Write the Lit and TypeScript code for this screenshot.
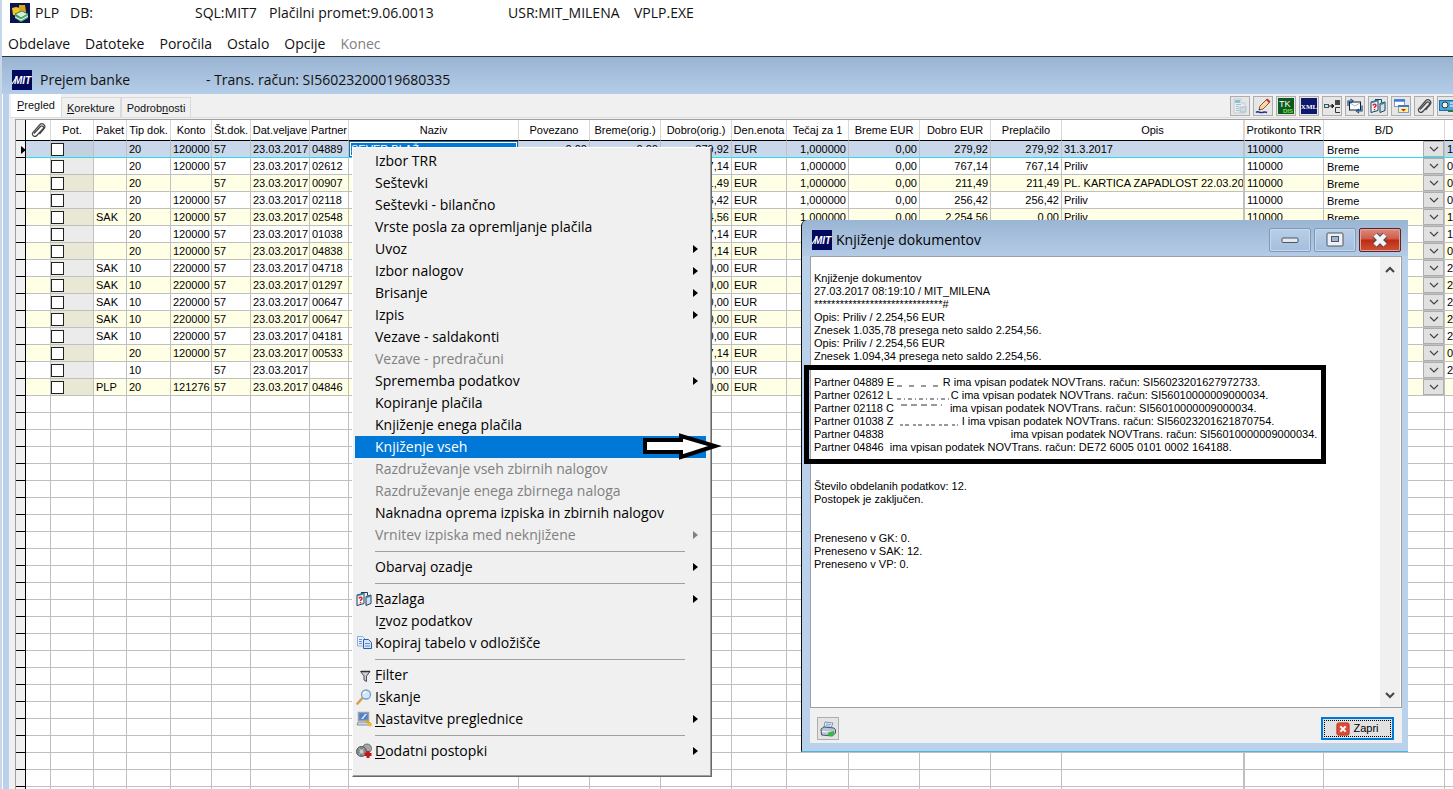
import { LitElement, html, svg, css, nothing } from "lit";
import { customElement, state } from "lit/decorators.js";
import { classMap } from "lit/directives/class-map.js";

type Align = "l" | "r" | "c";

interface Column {
  title: string;
  width: number;
  align: Align;
}

const COLUMNS: Column[] = [
  { title: "Pot.", width: 43, align: "l" },
  { title: "Paket", width: 33, align: "l" },
  { title: "Tip dok.", width: 44, align: "l" },
  { title: "Konto", width: 41, align: "r" },
  { title: "Št.dok.", width: 39, align: "l" },
  { title: "Dat.veljave", width: 59, align: "l" },
  { title: "Partner", width: 39, align: "l" },
  { title: "Naziv", width: 170, align: "l" },
  { title: "Povezano", width: 71, align: "r" },
  { title: "Breme(orig.)", width: 71, align: "r" },
  { title: "Dobro(orig.)", width: 71, align: "r" },
  { title: "Den.enota", width: 55, align: "l" },
  { title: "Tečaj za 1", width: 62, align: "r" },
  { title: "Breme EUR", width: 71, align: "r" },
  { title: "Dobro EUR", width: 71, align: "r" },
  { title: "Preplačilo", width: 71, align: "r" },
  { title: "Opis", width: 183, align: "l" },
  { title: "Protikonto TRR", width: 79, align: "l" },
  { title: "B/D", width: 121, align: "l" },
];

// paket, tip, konto, št. dok., datum, partner, naziv, povezano, breme, dobro, enota,
// tečaj, breme EUR, dobro EUR, preplačilo, opis, protikonto, zadnji stolpec
const ROWS: string[][] = [
  ["", "20", "120000", "57", "23.03.2017", "04889", "SEVER BLAŽ", "0,00", "0,00", "279,92", "EUR", "1,000000", "0,00", "279,92", "279,92", "31.3.2017", "110000", "1"],
  ["", "20", "120000", "57", "23.03.2017", "02612", "", "", "", "767,14", "EUR", "1,000000", "0,00", "767,14", "767,14", "Priliv", "110000", "0"],
  ["", "20", "", "57", "23.03.2017", "00907", "", "", "", "211,49", "EUR", "1,000000", "0,00", "211,49", "211,49", "PL. KARTICA ZAPADLOST 22.03.20", "110000", "0"],
  ["", "20", "120000", "57", "23.03.2017", "02118", "", "", "", "256,42", "EUR", "1,000000", "0,00", "256,42", "256,42", "Priliv", "110000", "0"],
  ["SAK", "20", "120000", "57", "23.03.2017", "02548", "", "", "", "2.254,56", "EUR", "1,000000", "0,00", "2.254,56", "0,00", "Priliv", "110000", "1"],
  ["", "20", "120000", "57", "23.03.2017", "01038", "", "", "", "767,14", "EUR", "", "", "", "", "", "", "1"],
  ["", "20", "120000", "57", "23.03.2017", "04838", "", "", "", "767,14", "EUR", "", "", "", "", "", "", "0"],
  ["SAK", "10", "220000", "57", "23.03.2017", "04718", ".", "", "", "0,00", "EUR", "", "", "", "", "", "", "2"],
  ["SAK", "10", "220000", "57", "23.03.2017", "01297", "", "", "", "0,00", "EUR", "", "", "", "", "", "", "2"],
  ["SAK", "10", "220000", "57", "23.03.2017", "00647", "", "", "", "0,00", "EUR", "", "", "", "", "", "", "2"],
  ["SAK", "10", "220000", "57", "23.03.2017", "00647", "", "", "", "0,00", "EUR", "", "", "", "", "", "", "2"],
  ["SAK", "10", "220000", "57", "23.03.2017", "04181", "", "", "", "0,00", "EUR", "", "", "", "", "", "", "2"],
  ["", "20", "120000", "57", "23.03.2017", "00533", "", "", "", "767,14", "EUR", "", "", "", "", "", "", "0"],
  ["", "10", "", "57", "23.03.2017", "", "", "", "", "0,00", "EUR", "", "", "", "", "", "", "2"],
  ["PLP", "20", "121276", "57", "23.03.2017", "04846", "", "", "", "0,00", "EUR", "", "", "", "", "", "", ""],
];

const EMPTY_ROWS = Array.from({ length: 60 });

const icon = (body: unknown, size = 16) =>
  html`<svg width=${size} height=${size} viewBox="0 0 16 16" aria-hidden="true">${body}</svg>`;

const helpBooks = svg`
  <path d="M1 4l7-2v10.500l-7 2z" fill="#f2f7fa" stroke="#1f3f5c"/>
  <path d="M10 5.500l5-1.500v8.500l-5 2z" fill="#cfe4ee" stroke="#1f3f5c"/>
  <path d="M5 1.500h6.500v3" fill="none" stroke="#1f3f5c"/>
  <path d="M1.500 4.500l6-1.700M10.500 6.200l4-1.200" stroke="#2f86b0" stroke-width="1.500"/>
  <path d="M3 7.500c.4-1.700 3.400-1.500 2.900.3-.3 1-1.400.8-1.400 2.200M4.500 11v1.200" fill="none" stroke="#d22" stroke-width="1.500"/>`;

const clip = svg`
  <path d="M4 11.500l6.500-7c1.500-1.600 4 .4 2.600 2.200L6.800 13.500c-2.300 2.400-5.800-.6-3.700-3.200L9.500 3c2.800-3 7 .4 4.600 3.600l-4.600 5.400" fill="none" stroke="#444" stroke-width="1.200"/>`;

const ICONS: Record<string, unknown> = {
  clip,
  help: helpBooks,
  sheet: svg`
    <path d="M2 1h7v4h4v10H2z" fill="#e6edf2" stroke="#c0ccd6"/>
    <path d="M4 6.500h5M4 8.500h3M4 10.500h3M4 12.500h3" stroke="#a9bfd0"/>
    <rect x="8" y="9" width="6" height="5" fill="#cfd8df" stroke="#b4c1cc"/>
    <rect x="3" y="2" width="5" height="3" fill="#8fbdd6"/>`,
  pencil: svg`
    <path d="M4 12l1-4 7-7 3 3-7 7z" fill="#fbd9a0" stroke="#8a5a30"/>
    <path d="M11 2l1.500-1.500 3 3L14 5z" fill="#c83030"/>
    <path d="M4 12l1.500-.4-1-1.200z" fill="#222"/>
    <path d="M1 14.500c2-2 4 .8 6 0s3-1 5 0" fill="none" stroke="#1c2a9c" stroke-width="1.500"/>`,
  tk: svg`
    <rect width="16" height="16" fill="#0c5a1e"/>
    <text x="1" y="9" font-size="9" fill="#fff" font-family="Liberation Sans">TK</text>
    <text x="5" y="15" font-size="6" fill="#7fe04a" font-weight="bold" font-family="Liberation Sans">DIS</text>`,
  xml: svg`
    <rect width="16" height="16" fill="#10186e"/>
    <text x="8" y="11" text-anchor="middle" font-size="7" font-weight="bold" fill="#fff" font-family="Liberation Serif">XML</text>`,
  tree: svg`
    <rect x="0.500" y="6.500" width="4" height="3" fill="#cfe9df" stroke="#356"/>
    <path d="M5 8h4M8 6l2 2-2 2z" fill="#222" stroke="#222"/>
    <rect x="11" y="2" width="5" height="5" fill="#444"/>
    <path d="M16 9.500h-4.500v5H16" fill="none" stroke="#333"/>`,
  mail: svg`
    <rect x="2.500" y="4" width="11" height="8" fill="#fff" stroke="#123"/>
    <path d="M3 5l5 3L13 5" fill="none" stroke="#9ab" stroke-width=".8"/>
    <path d="M1 8V3h3M3.500 1L6 3 3.500 5M15 7.500V13h-4M12 11l-2.500 2 2.500 2" fill="none" stroke="#134b86" stroke-width="1.200"/>`,
  windows: svg`
    <rect x="1.500" y="1.500" width="10" height="7" fill="#fff" stroke="#7f9cc9"/>
    <path d="M1 2.500h11" stroke="#3f78d8" stroke-width="2.400"/>
    <rect x="5.500" y="7.500" width="10" height="7" fill="#fff29a" stroke="#7f9cc9"/>
    <path d="M5 8h11" stroke="#3f78d8" stroke-width="2"/>
    <path d="M8 11h5l-2.500 2.500z" fill="#c22"/>`,
  monitor: svg`
    <rect x="0.500" y="2.500" width="15" height="10" fill="#4aa6e0" stroke="#1f6aa5"/>
    <circle cx="6" cy="7" r="3" fill="#f2f8c8" stroke="#236"/>
    <path d="M11 5h4M11 8h4" stroke="#fff"/>
    <path d="M9 13h6" stroke="#2a7a3c" stroke-width="2"/>`,
  copy: svg`
    <path d="M1.500 1.500h5l2.500 2.500v7H1.500z" fill="#e8f1ff" stroke="#8fadd8"/>
    <path d="M7.500 4.500h5l3 3v6h-8z" fill="#d3e4fb" stroke="#2f5ca6"/>
    <path d="M3 4.500h3M3 6.500h3M3 8.500h3M9 8.500h5M9 11h5" stroke="#5f8fd0"/>`,
  filter: svg`
    <path d="M4.500 4.500h9.500L10.500 9v5.500L8 13V9z" fill="#c9ccd0" stroke="#4b4f55"/>
    <path d="M5 4.500h9" stroke="#2e3136" stroke-width="1.500"/>`,
  search: svg`
    <path d="M1.500 14.500l4.500-5" stroke="#dd9a4a" stroke-width="2.600" stroke-linecap="round"/>
    <circle cx="10" cy="5.500" r="4.500" fill="#cfe9fb" stroke="#7a9fc4" stroke-width="1.300"/>
    <path d="M7.500 5a2.600 2.600 0 012.500-2.200" fill="none" stroke="#fff" stroke-width="1.300"/>`,
  settings: svg`
    <rect x="2.500" y="1.500" width="10" height="8" fill="#4f7fc8" stroke="#9aa1ab" stroke-width="1.500"/>
    <path d="M5 8l4-5h2l-4 5z" fill="#d8e9fb"/>
    <path d="M2 11h11l1 3H1z" fill="#d0d5db" stroke="#8a929c"/>
    <path d="M10 9l4 4" stroke="#d9a028" stroke-width="2.400"/><circle cx="14" cy="13.500" r="2" fill="#e9bd3c"/>`,
  gears: svg`
    <circle cx="11" cy="5.500" r="4.500" fill="#a4a8ab" stroke="#6b6f72"/>
    <circle cx="5.500" cy="8.500" r="5" fill="#84888b" stroke="#55595c"/>
    <path d="M3 5l5 7M8 5l-5 7" stroke="#b7babc"/>
    <circle cx="5.500" cy="8.500" r="2" fill="#c9ccce"/>
    <path d="M12 8v7M8.500 11.500h7" stroke="#c81414" stroke-width="3"/>`,
  printer: svg`
    <path d="M5 1l8 1-2 5-7-1z" fill="#eef5ff" stroke="#7b93b8"/>
    <path d="M6 3l5 .5M5.500 4.700l5 .5" stroke="#7f9fd0"/>
    <path d="M1 8l3-2 10 1 1.500 1.500V12l-3 3-11-1z" fill="#b9c4d2" stroke="#47566b"/>
    <path d="M2 10.500l10 .8" stroke="#fff"/>
    <path d="M8 11.500l6-1.500v3L12 14.500H8z" fill="#2fbf36"/>`,
  close: svg`
    <rect x="1" y="1" width="14" height="14" rx="2" fill="#e04a35" stroke="#b03020"/>
    <path d="M5 5l6 6M11 5l-6 6" stroke="#fff" stroke-width="2.400"/>`,
};

const TOOLBAR: [string, string][] = [
  ["sheet", "Dokument"],
  ["pencil", "Uredi"],
  ["tk", "TKDIS"],
  ["xml", "XML"],
  ["tree", "Vezave"],
  ["mail", "Pošlji"],
  ["help", "Razlaga"],
  ["windows", "Okna"],
  ["clip", "Priponke"],
  ["monitor", "Prikaz"],
];

interface MenuItem {
  label?: string;
  key?: number;
  sub?: boolean;
  off?: boolean;
  icon?: string;
}

const MENU: MenuItem[] = [
  { label: "Izbor TRR" },
  { label: "Seštevki" },
  { label: "Seštevki - bilančno" },
  { label: "Vrste posla za opremljanje plačila" },
  { label: "Uvoz", sub: true },
  { label: "Izbor nalogov", sub: true },
  { label: "Brisanje", sub: true },
  { label: "Izpis", sub: true },
  { label: "Vezave - saldakonti" },
  { label: "Vezave - predračuni", off: true },
  { label: "Sprememba podatkov", sub: true },
  { label: "Kopiranje plačila" },
  { label: "Knjiženje enega plačila" },
  { label: "Knjiženje vseh" },
  { label: "Razdruževanje vseh zbirnih nalogov", off: true },
  { label: "Razdruževanje enega zbirnega naloga", off: true },
  { label: "Naknadna oprema izpiska in zbirnih nalogov" },
  { label: "Vrnitev izpiska med neknjižene", off: true, sub: true },
  {},
  { label: "Obarvaj ozadje", sub: true },
  {},
  { label: "Razlaga", key: 0, sub: true, icon: "help" },
  { label: "Izvoz podatkov", key: 1 },
  { label: "Kopiraj tabelo v odložišče", icon: "copy" },
  {},
  { label: "Filter", key: 0, icon: "filter" },
  { label: "Iskanje", key: 1, icon: "search" },
  { label: "Nastavitve preglednice", key: 0, sub: true, icon: "settings" },
  {},
  { label: "Dodatni postopki", key: 0, sub: true, icon: "gears" },
];

const accel = (text: string, at?: number) =>
  at === undefined
    ? text
    : html`${text.slice(0, at)}<u>${text[at]}</u>${text.slice(at + 1)}`;

const mitLogo = () => html`<svg width="20" height="20" viewBox="0 0 20 20" aria-hidden="true">
  <rect width="20" height="20" fill="#00085c" />
  <path d="M0 14l4-6" stroke="#fff" stroke-width="1.200" />
  <text x="2" y="14" font-family="Liberation Sans" font-size="10" font-weight="bold" font-style="italic" fill="#fff">MIT</text>
</svg>`;

const shared = css`
  * { box-sizing: border-box; }
  button, input, select { font: inherit; color: inherit; margin: 0; padding: 0; }
  svg { display: block; flex: none; }
`;

@customElement("payments-grid")
class PaymentsGrid extends LitElement {
  static styles = [shared, css`
    :host { display: block; flex: 1; min-height: 0; overflow: hidden; background: #fff; border: solid #a0a0a0; border-width: 1px 0 0 1px; font: 11px/16px "Liberation Sans", sans-serif; color: #000; }
    table { table-layout: fixed; width: 100%; border-collapse: separate; border-spacing: 0; }
    th, td { padding: 0 2px; border-right: 1px solid #c0c0c0; border-bottom: 1px solid #c0c0c0; font-weight: normal; white-space: nowrap; overflow: hidden; text-align: left; }
    td { height: 17px; }
    th { height: 21px; text-align: center; border-right-color: #d8d8d8; border-bottom-color: #000; padding: 0; }
    th svg { margin: 0 auto; }
    .r { text-align: right; }
    .mark { background: #f0f0f0; border-right: 1px solid #000; border-bottom-color: #000; padding: 0; }
    .mark svg { margin: 2px 0 0 4px; }
    .edge { border-right-width: 2px; }
    .alt td { background: #ffffe6; }
    .pot { padding: 0; }
    .body .pot { background: #ebebeb; }
    .body.alt .pot { background: #e8e8d4; }
    .body .mark { background: #f0f0f0; }
    .cur td { background: #c8d8ea; border-bottom-color: #28dcf0; }
    .cur .pot { background: #c3d0e0; }
    .cur .mark { border-bottom-color: #000; }
    .cur .bd { background: #fff; }
    .cur .field { background: #0078d7; color: #fff; box-shadow: inset 0 0 0 1px #1c6e9c, inset 0 0 0 2px #fff; }
    .pot input { appearance: none; display: block; width: 13px; height: 13px; margin-top: 1px; background: #fff; border: 1px solid #222; }
    .bd { padding: 0; }
    .pick { display: grid; grid-template-columns: 1fr 21px; height: 16px; }
    .pick select { appearance: none; grid-area: 1 / 1 / 2 / 3; border: 0; background: transparent; padding: 2px 24px 0 3px; line-height: 14px; border-radius: 0; }
    .drop { grid-area: 1 / 2; pointer-events: none; background: #e1e1e1; border: 1px solid #adadad; display: grid; place-items: center; }
    .last { border-right: 0; }
  `];

  private row(r: string[], i: number) {
    const cells = r.slice(0, 17);
    return html`<tr class=${classMap({ body: true, alt: i > 0 && i % 2 === 0, cur: i === 0 })}>
      <td class="mark">${i === 0 ? html`<svg width="6" height="8" viewBox="0 0 6 8"><path d="M1 0l5 4-5 4z" /></svg>` : nothing}</td>
      <td></td>
      <td class="pot"><input type="checkbox" aria-label="Potrditev ${i + 1}" /></td>
      ${cells.map((v, c) => html`<td class=${classMap({ r: COLUMNS[c + 1].align === "r", edge: c === 15, field: c === 6 && i === 0 })}>${v}</td>`)}
      <td class="bd">
        <div class="pick">
          <select aria-label="B/D ${i + 1}"><option>Breme</option><option>Dobro</option></select>
          <span class="drop"><svg width="10" height="6" viewBox="0 0 10 6"><path d="M1 1l4 4 4-4" fill="none" stroke="#444" stroke-width="1.200" /></svg></span>
        </div>
      </td>
      <td class="last">${r[17]}</td>
    </tr>`;
  }

  render() {
    return html`<table>
      <colgroup>
        <col style="width:10px" /><col style="width:25px" />
        ${COLUMNS.map((c) => html`<col style="width:${c.width}px" />`)}
        <col />
      </colgroup>
      <thead><tr>
        <th class="mark"></th>
        <th>${icon(clip)}</th>
        ${COLUMNS.map((c) => html`<th class=${classMap({ edge: c.title === "Opis" })}>${c.title}</th>`)}
        <th class="last"></th>
      </tr></thead>
      <tbody>
        ${ROWS.map((r, i) => this.row(r, i))}
        ${EMPTY_ROWS.map(() => html`<tr><td class="mark"></td><td></td>
          ${COLUMNS.map((c) => html`<td class=${classMap({ edge: c.title === "Opis" })}></td>`)}<td class="last"></td></tr>`)}
      </tbody>
    </table>`;
  }
}

@customElement("context-menu")
class ContextMenu extends LitElement {
  static styles = [shared, css`
    :host { display: flex; flex-direction: column; width: 360px; padding: 2px 5px 14px 2px; background: #f0f0f0; border: 1px solid; border-color: #fff #696969 #696969 #fff; box-shadow: inset -1px -1px #a0a0a0; font: 14px/22px "Open Sans", sans-serif; color: #000; }
    button { display: grid; grid-template-columns: 20px 1fr 14px; align-items: center; height: 22px; padding-left: 0; border: 0; background: none; text-align: left; white-space: nowrap; }
    .on { background: #0078d7; color: #fff; }
    button:disabled { color: #808080; }
    button svg { margin-left: 1px; }
    .sep { height: 10px; margin: 0 21px 0 20px; display: grid; align-items: center; }
    .sep::before { content: ""; border-top: 1px solid #a0a0a0; }
    u { text-underline-offset: 2px; }
  `];

  @state() private active = "Knjiženje vseh";

  render() {
    return MENU.map((m) => m.label
      ? html`<button role="menuitem" class=${classMap({ on: m.label === this.active })} ?disabled=${!!m.off}
          @mouseenter=${() => { this.active = m.label!; }}>
          <span>${m.icon ? icon(ICONS[m.icon]) : nothing}</span>
          <span>${accel(m.label, m.key)}</span>
          ${m.sub ? html`<svg width="5" height="8" viewBox="0 0 5 8"><path d="M0 0l5 4-5 4z" fill="currentColor" /></svg>` : nothing}
        </button>`
      : html`<div class="sep" role="separator"></div>`);
  }
}

@customElement("log-dialog")
class LogDialog extends LitElement {
  static styles = [shared, css`
    :host { display: flex; flex-direction: column; width: 607px; height: 532px; padding: 0 6px 8px 8px; background: linear-gradient(#9ab5d3, #b4cbe6 36px, #b9d1ea 36px); border-left: 1px solid #111; border-bottom: 1px solid #48b8e0; border-radius: 6px 0 0 0; font: 11px/13px "Liberation Sans", sans-serif; color: #000; }
    header { display: flex; align-items: center; height: 36px; padding: 4px 1px 0 2px; gap: 4px; }
    h2 { flex: 1; margin: 0; font: 14px/20px "Open Sans", sans-serif; }
    .caps { display: flex; gap: 3px; }
    .caps button { width: 42px; height: 24px; display: grid; place-items: center; border: 1px solid #7f98b8; border-radius: 2px; background: linear-gradient(#b8cfe8, #a4bedc); box-shadow: inset 0 0 0 1px #c5d8ec; }
    .caps .x { background: linear-gradient(#dc8c7e, #cf5a48 45%, #bc2c14 50%, #cc5238); border-color: #5c2420; box-shadow: inset 0 0 0 1px #e2a498; }
    .view { flex: 1; min-height: 0; display: flex; background: #fff; border: 1px solid #a0a0a0; }
    .log { flex: 1; padding: 15px 0 0 3px; overflow: hidden; }
    .line { height: 13px; display: flex; white-space: pre; }
    .name { display: flex; justify-content: space-between; padding: 0 3px; }
    .bar { width: 20px; display: flex; flex-direction: column; justify-content: space-between; align-items: center; background: #f0f0f0; padding: 7px 0; margin-right: 1px; }
    .bar button { border: 0; background: none; width: 16px; height: 10px; display: grid; place-items: center; }
    footer { display: flex; justify-content: space-between; align-items: center; height: 35px; padding: 6px 8px 0 7px; background: #f0f0f0; }
    .print { width: 22px; height: 23px; display: grid; place-items: center; background: #e4e4e4; border: 1px solid #adadad; }
    .ok { width: 73px; height: 23px; display: flex; align-items: center; justify-content: center; gap: 3px; background: #e1e1e1; border: 2px solid #0078d7; outline: 1px dotted #000; outline-offset: -4px; }
  `];

  private partner(no: string, width: number, first: string, last: string, tail: string, dashes = "") {
    return html`<div class="line">Partner ${no}<span class="name" style="width:${width}px"><span>${first}</span>${dashes
      ? html`<svg width=${width - 24} height="13" viewBox="0 0 ${width - 24} 13"><path d="M2 ${first === "C" ? 3 : 10}H${width - 24}" stroke="#333" fill="none" stroke-dasharray=${dashes} /></svg>`
      : nothing}<span>${last}</span></span>ima vpisan podatek NOVTrans. račun: ${tail}</div>`;
  }

  private plain(lines: string[]) {
    return lines.map((t) => html`<div class="line">${t}</div>`);
  }

  render() {
    return html`
      <header>
        ${mitLogo()}
        <h2>Knjiženje dokumentov</h2>
        <div class="caps">
          <button aria-label="Pomanjšaj"><svg width="18" height="8" viewBox="0 0 18 8"><rect x="1" y="2" width="16" height="4.500" rx="1" fill="#e8e8e8" stroke="#4c5566" /></svg></button>
          <button aria-label="Povečaj"><svg width="18" height="16" viewBox="0 0 18 16"><rect x="1" y="1" width="16" height="13" rx="1" fill="#f0f0f0" stroke="#4c5566" /><rect x="5.500" y="4.500" width="7" height="5" fill="#9fb6d2" stroke="#4c5566" /></svg></button>
          <button class="x" aria-label="Zapri okno"><svg width="18" height="16" viewBox="0 0 18 16"><path d="M4 3l10 10M14 3L4 13" stroke="#4c4c5c" stroke-width="6.500" /><path d="M4 3l10 10M14 3L4 13" stroke="#f4f4f4" stroke-width="4.500" /></svg></button>
        </div>
      </header>
      <div class="view">
        <div class="log">
          ${this.plain([
            "Knjiženje dokumentov",
            "27.03.2017 08:19:10 / MIT_MILENA",
            "******************************#",
            "Opis: Priliv / 2.254,56 EUR",
            "Znesek 1.035,78 presega neto saldo 2.254,56.",
            "Opis: Priliv / 2.254,56 EUR",
            "Znesek 1.094,34 presega neto saldo 2.254,56.",
            "",
          ])}
          ${this.partner("04889", 70, "E", "R", "SI56023201627972733.", "5 7")}
          ${this.partner("02612", 78, "L", "C", "SI56010000009000034.", "4 3 1 3")}
          ${this.partner("02118", 67, "C", "", "SI56010000009000034.", "6 4")}
          ${this.partner("01038", 84, "Z", "I", "SI56023201621870754.", "3 2 4 4")}
          ${this.partner("04838", 127, "", "", "SI56010000009000034.")}
          ${this.partner("04846", 6, "", "", "DE72 6005 0101 0002 164188.")}
          ${this.plain(["", "", "Število obdelanih podatkov: 12.", "Postopek je zaključen.", "", "", "Preneseno v GK: 0.", "Preneseno v SAK: 12.", "Preneseno v VP: 0."])}
        </div>
        <div class="bar">
          <button aria-label="Gor"><svg width="10" height="7" viewBox="0 0 10 7"><path d="M1 6l4-4 4 4" fill="none" stroke="#444" stroke-width="2" /></svg></button>
          <button aria-label="Dol"><svg width="10" height="7" viewBox="0 0 10 7"><path d="M1 1l4 4 4-4" fill="none" stroke="#444" stroke-width="2" /></svg></button>
        </div>
      </div>
      <footer>
        <button class="print" aria-label="Natisni">${icon(ICONS.printer)}</button>
        <button class="ok">${icon(ICONS.close, 14)}<span>Zapri</span></button>
      </footer>`;
  }
}

@customElement("app-root")
class AppRoot extends LitElement {
  static styles = [shared, css`
    :host { display: flex; flex-direction: column; position: relative; height: 100vh; overflow: hidden; background: #fff; border-left: 2px solid #c8d8ea; font: 14px/20px "Open Sans", sans-serif; color: #111; }
    .title { display: grid; grid-template-columns: 20px 35px 125px 74px 239px 126px auto; align-items: center; height: 31px; padding: 0 0 6px 8px; white-space: nowrap; }
    .title span { padding-left: 5px; }
    nav { display: flex; gap: 15px; height: 25px; padding: 2px 0 2px 6px; }
    nav button { border: 0; background: none; white-space: nowrap; }
    nav button:disabled { color: #808080; }
    .mdi { display: flex; align-items: center; gap: 8px; height: 38px; padding: 8px 0 0 10px; border-top: 1px solid #2c3440; background: linear-gradient(#99b4d1, #b4cde9); }
    .mdi h1 { display: grid; grid-template-columns: 166px auto; margin: 0; font: inherit; white-space: nowrap; }
    .frame { flex: 1; min-height: 0; display: flex; flex-direction: column; margin-left: 1px; padding-left: 1px; border-left: 6px solid #b9d1ea; background: #f0f0f0; }
    .strip { display: flex; align-items: flex-end; height: 24px; border-bottom: 1px solid #dcdcdc; margin-bottom: 1px; font: 11px/14px "Liberation Sans", sans-serif; padding-left: 1px; }
    .strip [role="tab"] { height: 20px; padding: 0 5px; border: 1px solid #d9d9d9; border-bottom: 0; background: #f0f0f0; white-space: nowrap; }
    .strip [aria-selected="true"] { height: 23px; padding: 0 5px 2px; background: #fff; border-color: #fff; }
    .tools { display: flex; gap: 3px; margin: 0 -4px 1px auto; }
    .tools button { width: 20px; height: 20px; display: grid; place-items: center; border: 1px solid #adadad; background: #e6e6e6; }
    .wrap { flex: 1; min-height: 0; display: flex; padding-left: 5px; }
    context-menu { position: absolute; left: 350px; top: 147px; }
    log-dialog { position: absolute; left: 799px; top: 220px; }
    .arrow { position: absolute; left: 639px; top: 432px; }
    .box { position: absolute; left: 802px; top: 365px; width: 522px; height: 99px; border: 5px solid #000; pointer-events: none; }
  `];

  @state() private tab = 0;

  render() {
    const tabs: [string, number][] = [["Pregled", 0], ["Korekture", 0], ["Podrobnosti", 6]];
    return html`
      <div class="title">
        <svg width="20" height="20" viewBox="0 0 20 20" aria-hidden="true">
          <rect width="20" height="20" fill="#0a1450" />
          <path d="M2 5l4-1 4 1v8l-7-1z" fill="#f3c522" /><path d="M9 2h6l1 7H9z" fill="#e0a41c" />
          <path d="M5 11l7-3 6 3-7 4z" fill="#d5efd8" stroke="#2f8a50" />
          <path d="M5 12l6 3 7-4v4l-7 4-6-4z" fill="#5cb578" />
          <path d="M5 14l6 3 7-4" fill="none" stroke="#e8f6ea" />
        </svg>
        <span>PLP</span><span>DB:</span><span>SQL:MIT7</span><span>Plačilni promet:9.06.0013</span><span>USR:MIT_MILENA</span><span>VPLP.EXE</span>
      </div>
      <nav>
        ${["Obdelave", "Datoteke", "Poročila", "Ostalo", "Opcije"].map((t) => html`<button>${t}</button>`)}
        <button disabled>Konec</button>
      </nav>
      <div class="mdi">${mitLogo()}<h1><span>Prejem banke</span><span>- Trans. račun: SI56023200019680335</span></h1></div>
      <div class="frame">
        <div class="strip">
          ${tabs.map(([t, k], i) => html`<button role="tab" aria-selected=${this.tab === i ? "true" : "false"} @click=${() => { this.tab = i; }}>${accel(t, k)}</button>`)}
          <div class="tools">
            ${TOOLBAR.map(([id, label]) => html`<button aria-label=${label}>${icon(ICONS[id])}</button>`)}
          </div>
        </div>
        <div class="wrap"><payments-grid></payments-grid></div>
      </div>
      <context-menu role="menu"></context-menu>
      <log-dialog role="dialog" aria-label="Knjiženje dokumentov"></log-dialog>
      <svg class="arrow" width="84" height="28" viewBox="0 0 84 28" aria-hidden="true">
        <path d="M4 8h36V4l34 10-34 11v-5H4z" fill="#fff" stroke="#000" stroke-width="4" />
      </svg>
      <div class="box"></div>`;
  }
}
